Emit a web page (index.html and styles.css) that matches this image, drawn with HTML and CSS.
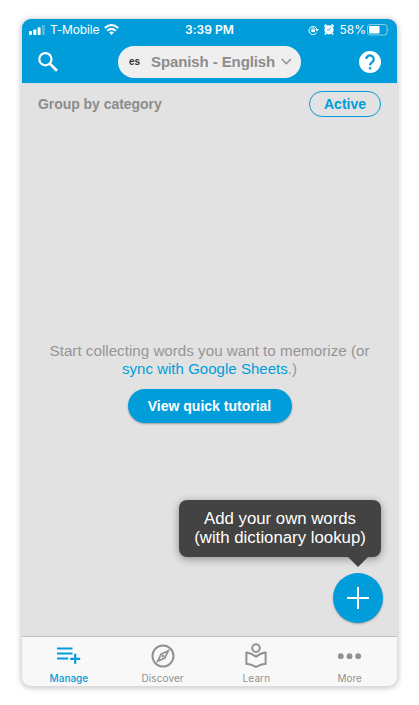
FILE: index.html
```html
<!DOCTYPE html>
<html lang="en">
<head>
<meta charset="utf-8">
<title>Manage words</title>
<link rel="stylesheet" href="styles.css">
</head>
<body>
<div class="phone">
  <header class="top">
    <div class="status">
      <div class="carrier">
        <svg width="16" height="10" viewBox="0 0 16 10" fill="#fff"><rect y="6" width="3" height="4" rx=".7"/><rect x="4.3" y="4.5" width="3" height="5.5" rx=".7"/><rect x="8.6" y="2.2" width="3" height="7.8" rx=".7"/><rect x="12.9" width="3" height="10" rx=".7" opacity=".3"/></svg>
        <span class="carrier-name">T-Mobile</span>
        <svg width="15" height="11" viewBox="0 0 15 11" fill="none" stroke="#fff" stroke-width="2"><path d="M.8 4.1Q7.5-2 14.2 4.1M3.2 6.7q4.3-3.7 8.6 0"/><path d="M5.2 8.5q2.3-1.8 4.6 0L7.5 10.9z" fill="#fff" stroke="none"/></svg>
      </div>
      <span class="clock">3:39 PM</span>
      <div class="power">
        <svg class="lock" width="11" height="10" viewBox="0 0 11 10" fill="none" stroke="#fff"><path d="M8.6 7.6A4.1 4.1 0 1 1 9 4.3" stroke-width="1"/><path d="M7.2 4h3.6L9 6.5z" fill="#fff" stroke="none"/><rect x="3.3" y="4.4" width="3.6" height="2.7" fill="#fff" stroke="none"/><path d="M4 4.6V3.8a1.1 1.1 0 0 1 2.2 0v.8" stroke-width=".8"/></svg>
        <svg class="alarm" width="10" height="11" viewBox="0 0 10 11"><path d="M.3 2.6 2.5.6M9.7 2.6 7.5.6M2 9.2.9 10.5M8 9.2l1.1 1.3" stroke="#fff" stroke-width="1.7"/><circle cx="5" cy="5.8" r="4.6" fill="#fff"/><path d="M6.7 3.6 5 6H3" fill="none" stroke="#009dda" stroke-width=".8"/></svg>
        <span class="percent">58%</span>
        <svg width="23" height="12" viewBox="0 0 23 12"><rect x=".5" y=".5" width="19.5" height="10.5" rx="2.5" fill="none" stroke="#fff" opacity=".5"/><rect x="2" y="2" width="10.5" height="7.5" rx="1" fill="#fff"/><path d="M21.4 4q1.3 1.7 0 3.4z" fill="#fff" opacity=".5"/></svg>
      </div>
    </div>
    <div class="toolbar">
      <svg class="search" width="20" height="20" viewBox="0 0 20 20" fill="none" stroke="#fff"><circle cx="7.4" cy="7.2" r="6.1" stroke-width="2.2"/><path d="m11.8 11.6 7.2 7.2" stroke-width="2.7"/></svg>
      <div class="language"><span class="code">es</span><span class="pair">Spanish - English</span><svg width="11" height="7" viewBox="0 0 11 7"><path d="m.7 1 4.6 4.7L9.9 1" fill="none" stroke="#8c8c8c" stroke-width="1.4"/></svg></div>
      <svg class="help" width="22" height="22" viewBox="0 0 22 22"><circle cx="11" cy="11" r="11" fill="#fff"/><path d="M7.3 8.1a3.7 3.7 0 1 1 6.3 2.6c-1.4 1.3-2.6 1.9-2.6 3.7" fill="none" stroke="#009dda" stroke-width="2.2"/><rect x="9.9" y="16.1" width="2.3" height="2.3" fill="#009dda"/></svg>
    </div>
  </header>
  <main class="content">
    <div class="filter"><span class="group">Group by category</span><span class="active">Active</span></div>
    <div class="empty">
      <p><span class="line-one">Start collecting words you want to memorize (or</span><br><span class="line-two"><a>sync with Google Sheets</a>.)</span></p>
      <div class="tutorial"><span>View quick tutorial</span></div>
    </div>
    <div class="tip"><span class="tip-one">Add your own words</span><br><span class="tip-two">(with dictionary lookup)</span></div>
    <div class="add"><svg width="24" height="24" viewBox="0 0 24 24"><path d="M12 1v22M1 12h22" stroke="#fff" stroke-width="2"/></svg></div>
  </main>
  <nav class="tabs">
    <div class="tab current"><svg width="26" height="26" viewBox="0 0 26 26" fill="none" stroke="currentColor" stroke-width="2.2"><path d="M1 5.5h15.5M1 10.5h15.5M1 15.5h11.2M19.2 10.8v10M14.2 15.8h10"/></svg><span class="manage">Manage</span></div>
    <div class="tab"><svg width="26" height="26" viewBox="0 0 26 26" fill="none" stroke="currentColor"><circle cx="13" cy="13" r="10.5" stroke-width="2"/><path d="m18.2 7.8-3.3 7.1-7.1 3.3 3.3-7.1z" stroke-width="1.8"/><circle cx="13" cy="13" r="1.3" fill="currentColor" stroke="none"/></svg><span class="discover">Discover</span></div>
    <div class="tab"><svg width="26" height="26" viewBox="0 0 26 26" fill="none" stroke="currentColor" stroke-width="2"><circle cx="13" cy="5.1" r="3.8"/><path d="M13 13.8Q8.5 10 3.4 9.6v11.2Q8.5 21.2 13 24q4.5-2.8 9.6-3.2V9.6q-5.1.4-9.6 4.2z"/></svg><span class="learn">Learn</span></div>
    <div class="tab"><svg width="26" height="26" viewBox="0 0 26 26" fill="currentColor"><circle cx="3.8" cy="13.2" r="2.9"/><circle cx="12.5" cy="13.2" r="2.9"/><circle cx="21.2" cy="13.2" r="2.9"/></svg><span class="more">More</span></div>
  </nav>
</div>
</body>
</html>
```
FILE: styles.css
```css
* { box-sizing: border-box; }
body { margin: 0; padding: 19px 22px; background: #fff; font-family: "Liberation Sans", Arial, sans-serif; }
svg { display: block; flex: none; }
span { white-space: nowrap; }
.phone { width: 375px; height: 667px; display: flex; flex-direction: column; border-radius: 9px; overflow: hidden; background: #e2e2e2; box-shadow: 0 1px 4px 2px rgba(0,0,0,.13), 0 1px 9px rgba(0,0,0,.08); }
.top { height: 64px; background: #009dda; flex: none; }
.status { height: 21px; display: grid; grid-template-columns: 1fr auto 1fr; align-items: center; padding: 0 7px; color: #fff; font: 12px/20px Inter, sans-serif; }
.carrier, .power { display: flex; align-items: center; }
.carrier-name { margin: 0 5px 0 5px; letter-spacing: -.15px; }
.clock { font-weight: 600; letter-spacing: .05px; }
.power { justify-content: flex-end; }
.lock { margin-left: 2px; }
.alarm { margin: 0 5px 0 5px; }
.percent { margin-right: 1px; }
.toolbar { height: 43px; display: flex; align-items: center; justify-content: space-between; padding: 0 16px; }
.language { width: 183px; height: 32px; margin-left: 2px; border-radius: 16px; background: #efefef; display: flex; align-items: center; padding-left: 11px; }
.code { font-size: 10px; font-weight: bold; color: #333; width: 22px; }
.pair { font-size: 15px; font-weight: bold; color: #8c8c8c; letter-spacing: -.1px; width: 124px; margin-right: 6px; }
.content { flex: 1; position: relative; display: flex; flex-direction: column; border-top: 1px solid #d6e0e4; }
.filter { display: flex; align-items: center; justify-content: space-between; padding: 7px 16px 0; }
.group { font-size: 14px; font-weight: bold; color: #8c8c8c; letter-spacing: -.05px; }
.active { width: 72px; height: 26px; border: 1px solid #009dda; border-radius: 13px; color: #009dda; font-size: 14px; font-weight: bold; line-height: 25px; text-align: center; }
.empty { margin-top: 225px; display: flex; flex-direction: column; align-items: center; color: #969696; font-size: 15px; line-height: 18px; text-align: center; }
.empty p { margin: 0; }
.empty a { color: #009dda; }
.line-one { font-size: 15.2px; }
.line-two { letter-spacing: .03px; }
.tutorial { width: 164px; height: 34px; margin-top: 11px; border-radius: 17px; background: #009dda; color: #fff; font-size: 14px; font-weight: bold; line-height: 35px; box-shadow: 0 1px 2px rgba(0,0,0,.3); }
.tip { position: absolute; left: 157px; top: 416px; width: 202px; height: 57px; padding-top: 9px; border-radius: 8px; background: #434343; color: #fff; font-size: 16.8px; line-height: 19px; text-align: center; box-shadow: 0 2px 9px rgba(0,0,0,.38); }
.tip::after { content: ""; position: absolute; left: 168px; top: 56px; border: 11px solid transparent; border-top: 11px solid #434343; border-bottom: 0; }
.add { position: absolute; left: 311px; top: 489px; width: 50px; height: 50px; border-radius: 50%; background: #009dda; display: grid; place-items: center; box-shadow: 0 1px 2px rgba(0,0,0,.3); }
.tabs { height: 50px; display: grid; grid-template-columns: repeat(4, 1fr); border-top: 1px solid #c1c1c1; background: #f8f8f8; flex: none; }
.tab { display: flex; flex-direction: column; align-items: center; padding-top: 6px; color: #929292; font: 10px/12px Inter, sans-serif; }
.tab span { margin-top: 3px; }
.discover, .learn { letter-spacing: .1px; }
.more { margin-right: 1px; }
.current { color: #009dda; font-weight: 500; }
```
